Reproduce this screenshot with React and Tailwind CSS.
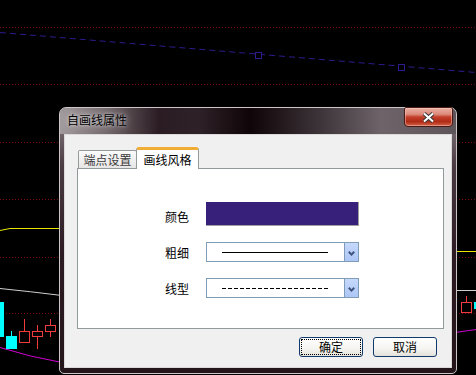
import React from "react";

const gridLines = [27, 84, 142, 199, 257, 313];

function Chart() {
  return (
    <svg className="absolute inset-0" width="476" height="375" viewBox="0 0 476 375">
      {gridLines.map((y) => (
        <line key={y} x1="0" x2="476" y1={y + 0.5} y2={y + 0.5} stroke="#7d0b0b" strokeDasharray="1 2" />
      ))}
      <line x1="0" y1="32.5" x2="476" y2="72.5" stroke="#2c1c8e" strokeDasharray="6 4" />
      <rect x="255.5" y="52.5" width="6" height="6" fill="#000" stroke="#2c1c8e" />
      <rect x="398.5" y="64.5" width="6" height="6" fill="#000" stroke="#2c1c8e" />

      <path d="M0 230.5 L10 228.5 L62 228.5" stroke="#e6e600" fill="none" />
      <path d="M455 251.5 L476 251.5" stroke="#e6e600" fill="none" />
      <path d="M0 288.5 Q30 291.5 62 295.5" stroke="#cfcfcf" fill="none" />
      <path d="M455 290.5 L476 290.5" stroke="#cfcfcf" fill="none" />
      <path d="M0 347.5 Q30 357 62 362.5" stroke="#d000d0" fill="none" />
      <path d="M455 332.5 Q466 331 476 329.5" stroke="#d000d0" fill="none" />

      {/* candles */}
      <rect x="0" y="302" width="4" height="35" fill="#00ffff" />
      <line x1="11.5" y1="331" x2="11.5" y2="336" stroke="#00ffff" />
      <rect x="6" y="336" width="11" height="13" fill="#00ffff" />
      <line x1="24.5" y1="319" x2="24.5" y2="331" stroke="#f03c3c" />
      <rect x="19.5" y="331.5" width="10" height="11" fill="#000" stroke="#f03c3c" />
      <line x1="37.5" y1="325" x2="37.5" y2="349" stroke="#f03c3c" />
      <rect x="32.5" y="331.5" width="10" height="5" fill="#000" stroke="#f03c3c" />
      <line x1="50.5" y1="319" x2="50.5" y2="337" stroke="#f03c3c" />
      <rect x="45.5" y="325.5" width="10" height="6" fill="#000" stroke="#f03c3c" />
      <line x1="466.5" y1="296" x2="466.5" y2="303" stroke="#f03c3c" />
      <rect x="461.5" y="302.5" width="10" height="10" fill="#000" stroke="#f03c3c" />
      <rect x="474" y="302" width="2" height="7" fill="#00ffff" />
    </svg>
  );
}

function Chevron() {
  return (
    <svg width="7" height="5" viewBox="0 0 7 5">
      <path d="M0.8 0.8 L3.5 3.6 L6.2 0.8" stroke="#3f547c" strokeWidth="2" fill="none" />
    </svg>
  );
}

function LineSelect({ dashed }) {
  return (
    <div className="flex h-[20px] w-[153px] border border-[#7f9db9] bg-white">
      <div className="flex flex-1 items-center pl-[15px]">
        <svg width="106" height="1" viewBox="0 0 106 1" className="block">
          <line x1="0" y1="0.5" x2="106" y2="0.5" stroke="#000" strokeDasharray={dashed ? "4 2" : undefined} />
        </svg>
      </div>
      <div className="flex w-[14px] items-center justify-center border-l border-[#7f9db9] bg-[linear-gradient(180deg,#c6d9fc,#adc6f6)] pt-[2px]">
        <Chevron />
      </div>
    </div>
  );
}

export default function App() {
  return (
    <div className="relative h-[375px] w-[476px] overflow-hidden bg-black font-['Noto_Sans_CJK_SC',sans-serif] text-[12px] leading-[14px]">
      <Chart />

      <div className="absolute left-[59px] top-[107px] flex h-[267px] w-[398px] flex-col rounded-t-[7px] rounded-b-[5px] border border-[#cbc5c8] bg-[linear-gradient(180deg,#8d8589_0%,#4a3a41_22%,#2c1b22_55%,#24151b_100%)]">
        <div className="flex h-[26px] items-start rounded-t-[6px] bg-[linear-gradient(90deg,#a29b9e_0%,#7a7074_10%,#2a1c22_25%,#2e2228_35%,#0f0407_48%,#3e353a_66%,#6d6368_81%,#5e555a_100%)]">
          <span className="ml-[7px] mt-[5px] text-black [text-shadow:0_0_8px_rgba(255,255,255,0.75),0_0_3px_rgba(255,255,255,0.6)]">
            自画线属性
          </span>
          <button
            type="button"
            className="ml-auto mr-[3px] mt-[-1px] flex h-[20px] w-[49px] items-center justify-center rounded-b-[4px] rounded-t-[2px] border border-[#4a1a16] bg-[linear-gradient(180deg,#eab0a4_0%,#dc8a7a_35%,#c3402c_50%,#b02a14_75%,#d4624a_100%)] shadow-[inset_0_0_0_1px_rgba(255,210,200,0.45)]"
          >
            <svg width="13" height="11" viewBox="0 0 13 11">
              <path d="M2 1.5 L11 9.5 M11 1.5 L2 9.5" stroke="#3a3a3a" strokeWidth="4" />
              <path d="M2 1.5 L11 9.5 M11 1.5 L2 9.5" stroke="#ffffff" strokeWidth="2" />
            </svg>
          </button>
        </div>

        <div className="mx-[4px] flex h-[234px] flex-col border border-[#ddd8da] bg-[#f0f0f0]">
          <div className="ml-[13px] mt-[12px] flex items-end">
            <div className="flex h-[18px] w-[59px] items-center justify-center rounded-t-[2px] border border-b-0 border-[#919b9c] bg-[linear-gradient(180deg,#fbfbfb,#e6e6e6)] text-[#3a3a3a]">
              端点设置
            </div>
            <div className="relative z-10 -mb-px -ml-px flex h-[22px] w-[63px] items-center justify-center rounded-t-[3px] border-x border-t-[3px] border-[#919b9c] border-t-[#f0ac35] bg-white text-black">
              画线风格
            </div>
          </div>

          <div className="ml-[12px] h-[161px] w-[367px] border border-[#919b9c] bg-white pl-[87px] pt-[33px] text-black">
            <div className="flex h-[24px] items-start">
              <span className="w-[41px] pt-[8px]">颜色</span>
              <div className="h-[24px] w-[153px] border-b border-r border-[#a0a0a0] bg-[#372079]" />
            </div>
            <div className="mt-[16px] flex items-center">
              <span className="w-[41px] pt-[1px]">粗细</span>
              <LineSelect />
            </div>
            <div className="mt-[16px] flex items-center">
              <span className="w-[41px] pt-[1px]">线型</span>
              <LineSelect dashed />
            </div>
          </div>

          <div className="mt-[8px] flex justify-end gap-[10px] pr-[14px]">
            <button
              type="button"
              className="flex h-[20px] w-[64px] rounded-[3px] border border-[#0f3a6b] bg-[linear-gradient(180deg,#ffffff_0%,#f5f4f0_60%,#e3e1d9_100%)] p-[1px] text-black"
            >
              <span className="flex flex-1 items-center justify-center border border-dotted border-black">确定</span>
            </button>
            <button
              type="button"
              className="flex h-[20px] w-[64px] items-center justify-center rounded-[3px] border border-[#0f3a6b] bg-[linear-gradient(180deg,#ffffff_0%,#f5f4f0_60%,#e3e1d9_100%)] text-black"
            >
              取消
            </button>
          </div>
        </div>
      </div>
    </div>
  );
}
